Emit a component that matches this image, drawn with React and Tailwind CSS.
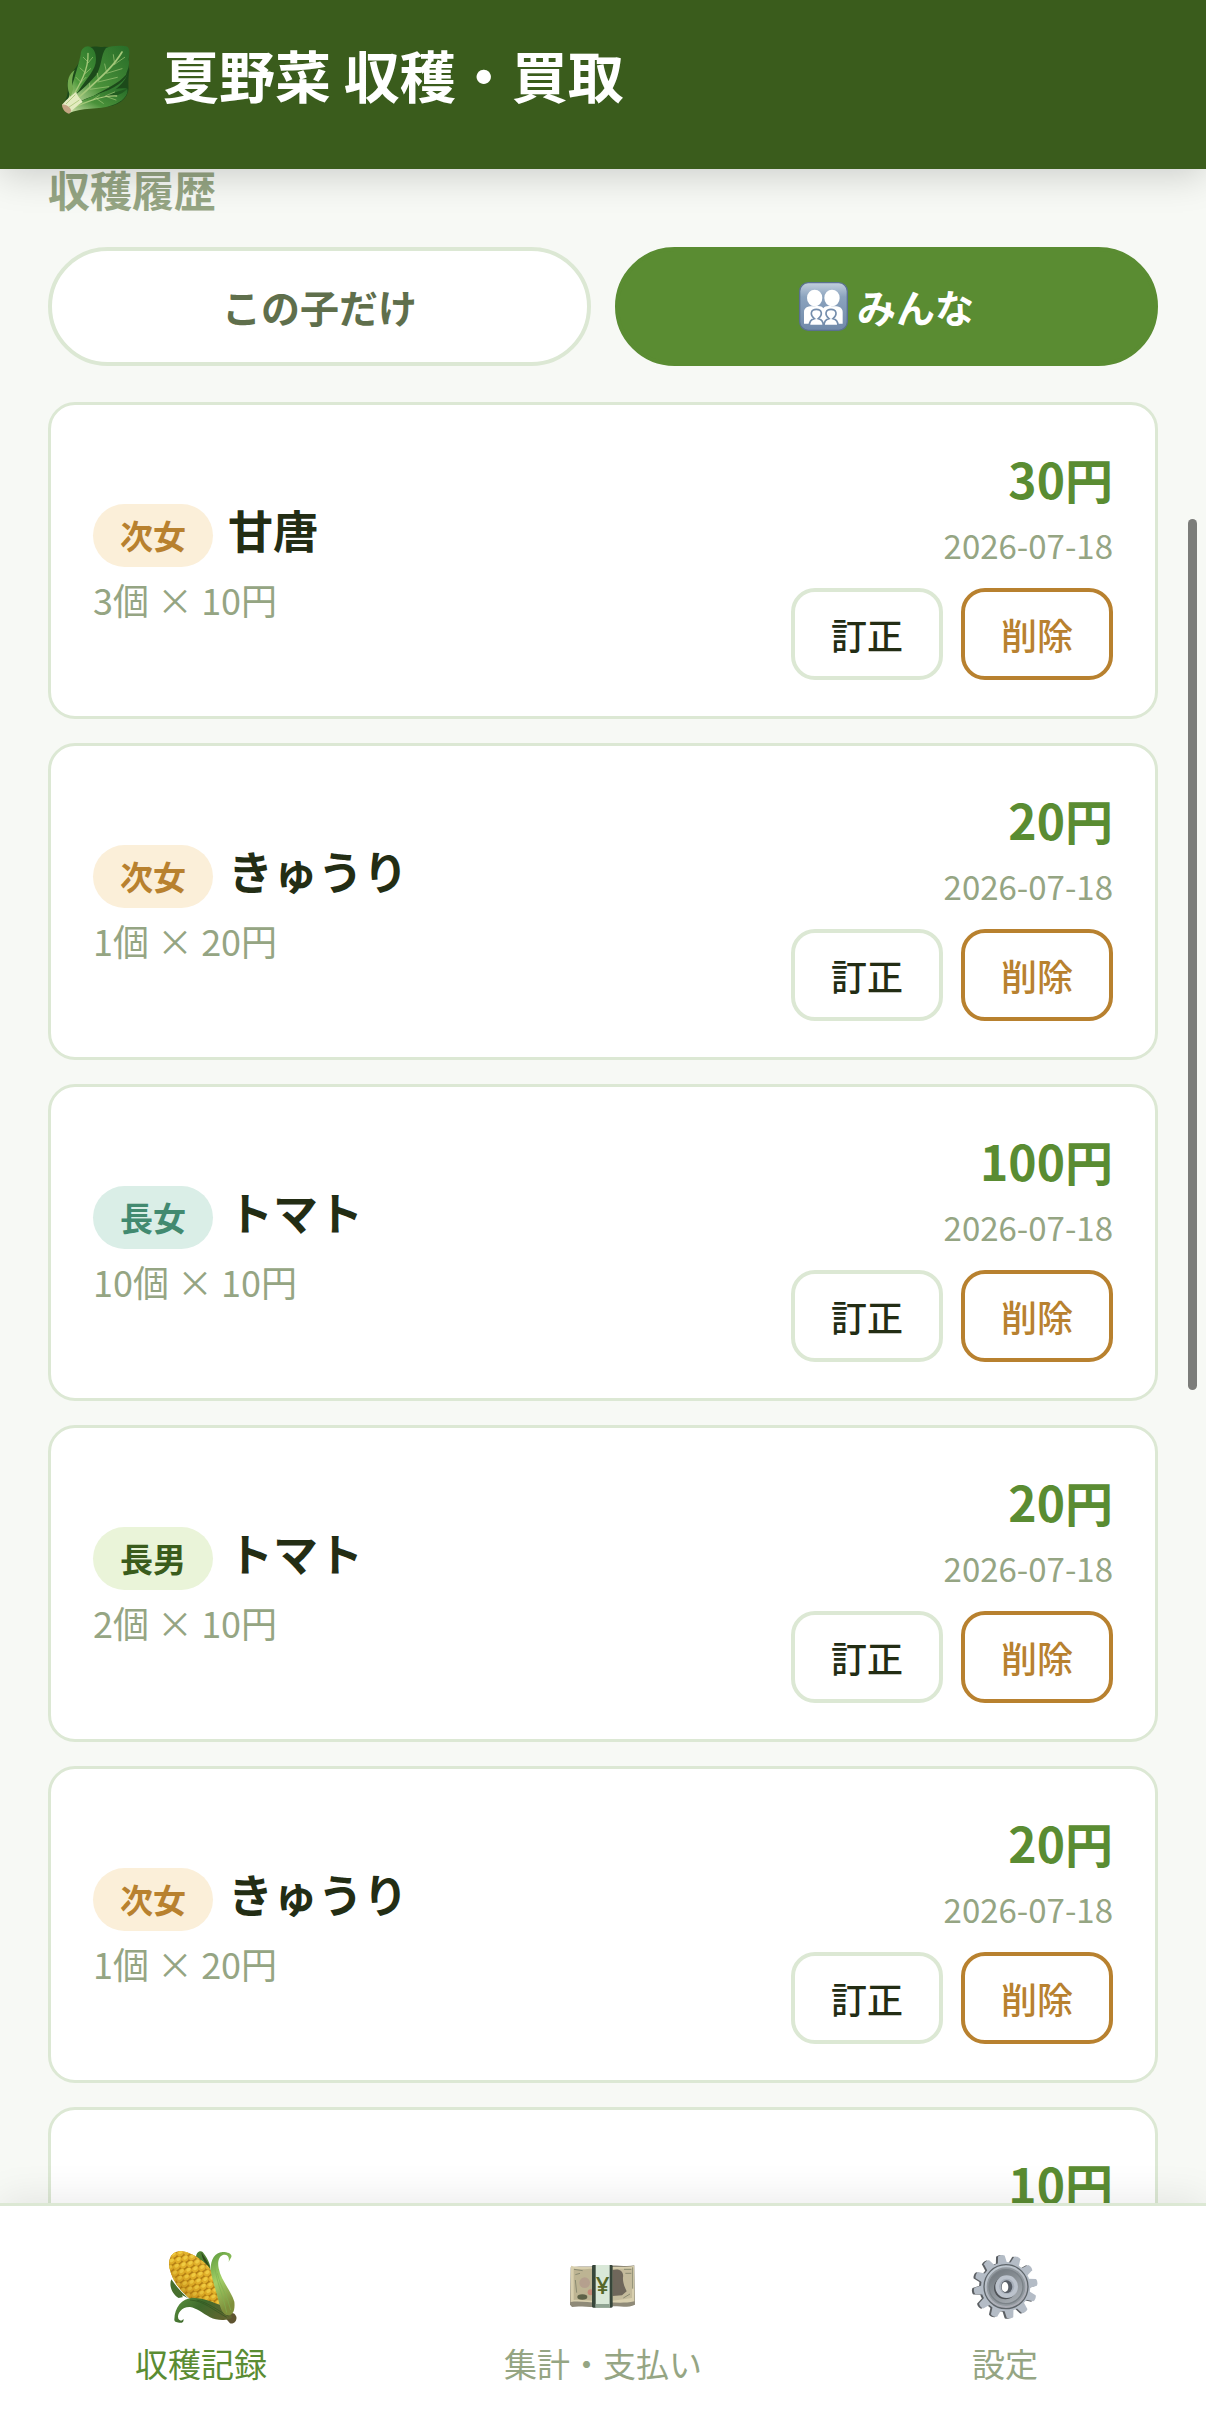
import { useState } from "react";

const RECORDS = [
  { id: 1, child: "次女", crop: "甘唐", count: 3, price: 10, date: "2026-07-18" },
  { id: 2, child: "次女", crop: "きゅうり", count: 1, price: 20, date: "2026-07-18" },
  { id: 3, child: "長女", crop: "トマト", count: 10, price: 10, date: "2026-07-18" },
  { id: 4, child: "長男", crop: "トマト", count: 2, price: 10, date: "2026-07-18" },
  { id: 5, child: "次女", crop: "きゅうり", count: 1, price: 20, date: "2026-07-18" },
  { id: 6, child: "長男", crop: "トマト", count: 1, price: 10, date: "2026-07-18" },
];

const BADGE = {
  次女: "bg-[#fbefd9] text-[#b8812f]",
  長女: "bg-[#daeee7] text-[#428a70]",
  長男: "bg-[#eaf4d9] text-[#3a5c1c]",
};

const TABS = [
  { id: "record", label: "収穫記録", Icon: CornIcon },
  { id: "summary", label: "集計・支払い", Icon: YenIcon },
  { id: "settings", label: "設定", Icon: GearIcon },
];

export default function App() {
  const [scope, setScope] = useState("all");
  const [tab, setTab] = useState("record");

  return (
    <div className="flex h-screen flex-col overflow-hidden bg-[#f7f9f5] font-['Noto_Sans_CJK_JP','Noto_Sans',sans-serif] text-[#232d14]">
      {/* Header */}
      <header className="z-10 flex shrink-0 items-center gap-[31px] bg-[#3a5c1c] px-[60px] pt-[38px] pb-[59px] text-white shadow-[0_6px_36px_rgba(0,0,0,0.18)]">
        <LeafIcon />
        <h1 className="text-[56px] leading-[72px] font-bold">夏野菜 収穫・買取</h1>
      </header>

      {/* History */}
      <main className="min-h-0 flex-1 overflow-hidden px-12">
        <h2 className="text-[42px] leading-[39px] font-bold text-[#95a583]">収穫履歴</h2>

        <div className="mt-[39px] grid grid-cols-2 gap-6">
          <ScopeButton active={scope === "mine"} onClick={() => setScope("mine")}>
            この子だけ
          </ScopeButton>
          <ScopeButton active={scope === "all"} onClick={() => setScope("all")}>
            <FamilyIcon />
            みんな
          </ScopeButton>
        </div>

        <ul className="mt-9 flex flex-col gap-6">
          {RECORDS.map((r) => (
            <RecordCard key={r.id} record={r} />
          ))}
        </ul>
      </main>

      {/* Bottom tabs */}
      <nav className="z-10 grid shrink-0 grid-cols-3 border-t-3 border-[#dce8d4] bg-white shadow-[0_-6px_36px_rgba(0,0,0,0.08)]">
        {TABS.map(({ id, label, Icon }) => (
          <button
            key={id}
            type="button"
            onClick={() => setTab(id)}
            className={[
              "flex flex-col items-center gap-4 pt-[45px] pb-[26px] text-[33px] leading-[48px]",
              tab === id ? "text-[#5a8c32]" : "text-[#95a583]",
            ].join(" ")}
          >
            <Icon />
            {label}
          </button>
        ))}
      </nav>

      {/* Scroll thumb */}
      <div className="fixed top-[519px] right-[9px] h-[871px] w-[9px] rounded-full bg-[#7c7d7a]" />
    </div>
  );
}

function ScopeButton({ active, onClick, children }) {
  return (
    <button
      type="button"
      aria-pressed={active}
      onClick={onClick}
      className={[
        "flex items-center justify-center gap-[9px] rounded-full border-4 py-[26px] text-[39px] leading-[59px] font-bold",
        active
          ? "border-[#5a8c32] bg-[#5a8c32] text-white"
          : "border-[#dce8d4] bg-white text-[#5f6f4c]",
      ].join(" ")}
    >
      {children}
    </button>
  );
}

function RecordCard({ record }) {
  const { child, crop, count, price, date } = record;
  return (
    <li className="flex shrink-0 items-center justify-between rounded-[27px] border-3 border-[#dce8d4] bg-white px-[42px] py-9">
      <div>
        <div className="flex items-baseline gap-[15px]">
          <span className={`rounded-full px-[27px] py-[6px] text-[33px] leading-[51px] font-bold ${BADGE[child]}`}>
            {child}
          </span>
          <span className="text-[45px] leading-[68px] font-bold">{crop}</span>
        </div>
        <p className="mt-[6px] text-[36px] leading-[52px] text-[#95a583]">
          {count}個 × {price}円
        </p>
      </div>

      <div className="text-right">
        <p className="text-[48px] leading-[74px] font-bold text-[#5a8c32]">{count * price}円</p>
        <p className="text-[33px] leading-[60px] text-[#95a583]">{date}</p>
        <div className="mt-[13px] flex justify-end gap-[18px]">
          <button type="button" className="rounded-[24px] border-4 border-[#dce8d4] px-9 py-[15px] text-[36px] leading-[54px] font-medium">
            訂正
          </button>
          <button type="button" className="rounded-[24px] border-4 border-[#b8812f] px-9 py-[15px] text-[36px] leading-[54px] font-medium text-[#b8812f]">
            削除
          </button>
        </div>
      </div>
    </li>
  );
}

function LeafIcon() {
  return (
    <svg className="size-[72px] shrink-0" viewBox="60 54 216 216" overflow="visible" aria-hidden="true">
      <defs>
        <linearGradient id="leafA" x1="0.8" y1="0" x2="0.1" y2="1">
          <stop offset="0" stopColor="#2f7a2c" />
          <stop offset="0.6" stopColor="#4f9a3c" />
          <stop offset="1" stopColor="#cfe0a0" />
        </linearGradient>
        <linearGradient id="leafB" x1="1" y1="0.1" x2="0" y2="1">
          <stop offset="0" stopColor="#2a6f29" />
          <stop offset="0.55" stopColor="#4a923a" />
          <stop offset="1" stopColor="#dbe8b4" />
        </linearGradient>
      </defs>
      <path d="M150 82C165 76 185 84 192 80L262 84C272 95 264 125 268 150C262 190 268 205 264 215C255 250 215 264 160 262C125 262 100 270 88 281L66 256C90 225 82 205 82 185C95 150 118 140 124 105Z" fill="#1c4a1a" />
      <path d="M122 104C122 88 134 79 144 79C160 82 168 96 168 118C168 150 140 175 116 212L78 258L92 214C100 180 112 150 122 104Z" fill="url(#leafA)" />
      <path d="M104 150C88 160 80 182 84 206C86 220 92 226 90 238L100 206C94 190 96 170 104 150Z" fill="#72a94e" />
      <path d="M198 84C215 76 250 76 262 80C271 88 268 104 266 118C270 140 262 150 258 164C236 190 200 205 160 228C125 240 100 254 84 262L76 250C105 225 140 200 168 166C186 140 182 104 198 84Z" fill="url(#leafB)" />
      <path d="M266 152C260 184 222 204 176 222L90 262C130 250 160 240 190 226C225 214 256 190 266 152Z" fill="#327a30" />
      <path d="M262 206C230 200 180 218 118 246L86 280C120 262 180 270 216 256C246 246 266 226 262 206Z" fill="url(#leafB)" />
      <path d="M262 206C240 212 205 222 180 234C210 232 246 226 262 206Z" fill="#215a20" />
      <g fill="none" stroke="#a5c87a" strokeLinecap="round">
        <path d="M144 100C146 150 122 190 86 250" strokeWidth="4" />
        <path d="M246 96C215 150 160 190 84 262" strokeWidth="5" />
        <path d="M230 228C190 226 140 244 92 268" strokeWidth="4" />
        <path d="M144 126L130 112M143 130L158 112M136 158L120 144M134 162L152 146M122 186L108 172M120 190L138 172M224 132L220 104M222 134L254 112M200 158L194 132M200 160L246 146M176 182L172 160M174 186L232 172M150 204L148 190M150 208L206 200M200 230L228 240M170 236L190 250M196 228L224 216M160 238L178 226" strokeWidth="2" />
      </g>
      <path d="M66 254C82 236 96 226 108 216C112 228 122 238 128 246C112 256 100 268 88 280Z" fill="#e3ebc0" />
      <path d="M78 252L106 224M86 262L118 240" stroke="#b4cc84" strokeWidth="3" fill="none" />
      <path d="M66 254C76 250 92 262 94 272L88 281C78 280 66 268 66 254Z" fill="#c3a583" />
    </svg>
  );
}

function FamilyIcon() {
  return (
    <svg className="size-[49px] shrink-0" viewBox="57 45 147 147" aria-hidden="true">
      <defs>
        <linearGradient id="familyBg" x1="0" y1="0" x2="0" y2="1">
          <stop offset="0" stopColor="#c3d0de" />
          <stop offset="0.3" stopColor="#8ba3be" />
          <stop offset="1" stopColor="#7089a9" />
        </linearGradient>
      </defs>
      <rect x="59" y="47" width="143" height="143" rx="26" fill="url(#familyBg)" stroke="#5b7191" strokeWidth="4" />
      <g fill="#fff">
        <ellipse cx="104" cy="93" rx="23" ry="25" />
        <ellipse cx="156" cy="93" rx="23" ry="25" />
        <path d="M72 170V135C72 120 86 116 104 118C118 116 126 118 130 124C134 118 142 116 156 118C174 116 188 120 188 135V170Z" />
      </g>
      <g fill="#fff" stroke="#748dac" strokeWidth="5">
        <path d="M88 176C88 164 95 157 103 155C88 142 93 127 109 127C125 127 130 142 115 155C123 157 130 162 130 176Z" />
        <path d="M132 176C132 164 139 157 147 155C132 142 137 127 153 127C169 127 174 142 159 155C167 157 174 162 174 176Z" />
      </g>
    </svg>
  );
}

// kernels sit on a grid tilted along the cob
const KERNELS = [];
for (let row = -5; row <= 5; row++) {
  for (let col = -6; col <= 6; col++) {
    const u = col * 22 + (row % 2 ? 11 : 0);
    const v = row * 18;
    KERNELS.push([580 + u * 0.68 - v * 0.73, 588 + u * 0.73 + v * 0.68]);
  }
}

function CornIcon() {
  return (
    <svg className="size-[72px]" viewBox="495 513 216 216" overflow="visible" aria-hidden="true">
      <defs>
        <clipPath id="cob">
          <path d="M508 560C504 530 520 512 545 514C572 517 594 532 615 550C634 567 640 585 645 610L662 674C630 672 600 660 570 656C545 636 515 602 508 560Z" />
        </clipPath>
        <linearGradient id="cobShade" x1="0.8" y1="0.1" x2="0.2" y2="0.8">
          <stop offset="0" stopColor="#fff2a0" stopOpacity="0.3" />
          <stop offset="0.5" stopColor="#d9a018" stopOpacity="0" />
          <stop offset="1" stopColor="#8a5a08" stopOpacity="0.5" />
        </linearGradient>
        <linearGradient id="huskRight" x1="0" y1="0" x2="0.3" y2="1">
          <stop offset="0" stopColor="#5c9a3c" />
          <stop offset="0.5" stopColor="#a3d068" />
          <stop offset="1" stopColor="#7f8f3c" />
        </linearGradient>
        <linearGradient id="huskLow" x1="0" y1="0" x2="1" y2="0.4">
          <stop offset="0" stopColor="#5c9440" />
          <stop offset="0.5" stopColor="#3f6a2c" />
          <stop offset="1" stopColor="#5f6430" />
        </linearGradient>
      </defs>
      <path d="M588 530C590 514 602 511 608 516C618 530 634 550 631 574C622 556 600 545 588 530Z" fill="#4f8234" />
      <path d="M604 516C612 532 626 546 629 564C618 552 606 540 604 516Z" fill="#2f4a1c" />
      <path d="M514 598C506 616 516 642 536 654L550 651C544 648 542 640 566 656C548 640 530 622 514 598Z" fill="#476f2e" />
      <g clipPath="url(#cob)">
        <rect x="500" y="505" width="170" height="175" fill="#b07c14" />
        {KERNELS.map(([x, y], i) => (
          <g key={i} transform={`rotate(-35 ${x} ${y})`}>
            <ellipse cx={x} cy={y} rx="11" ry="9" fill="#e0ae28" />
            <ellipse cx={x + 2} cy={y - 2} rx="7" ry="5" fill="#f0cc42" />
          </g>
        ))}
        <rect x="500" y="505" width="170" height="175" fill="url(#cobShade)" />
      </g>
      <path d="M676 714C684 698 702 692 709 710C712 722 700 734 690 730Z" fill="#5e5430" />
      <path d="M523 718C524 682 545 655 578 653C618 655 640 668 660 674C676 690 694 700 696 712C688 722 652 724 630 712C606 698 590 684 570 681C546 680 530 700 535 716C540 724 548 722 550 716C553 726 545 730 538 728C528 728 522 724 523 718Z" fill="url(#huskLow)" />
      <path d="M570 660C610 662 640 690 680 712M590 660C625 668 650 690 686 708" fill="none" stroke="#2f5420" strokeWidth="2" />
      <path d="M632 568C632 538 645 517 668 516C685 516 697 522 694 531L686 546C689 530 683 523 671 524C656 528 652 545 656 565C662 600 692 630 703 665C706 692 698 706 684 706C668 704 663 690 655 660C645 620 636 600 632 568Z" fill="url(#huskRight)" />
      <path d="M644 550C646 600 668 640 680 698M652 580C660 620 684 650 692 690" fill="none" stroke="#7fb050" strokeWidth="2" />
    </svg>
  );
}

function YenIcon() {
  return (
    <svg className="size-[72px]" viewBox="381 213 216 216" aria-hidden="true">
      <path d="M392 262C420 256 450 262 488 258C530 254 560 262 583 256L585 374C560 386 530 376 488 380C450 384 420 376 396 381L390 374Z" fill="#8f8a78" />
      <path d="M393 257C420 264 450 260 488 260C530 260 556 264 582 257L583 364C550 372 520 366 488 368C450 370 425 362 392 366Z" fill="#d8cfae" />
      <path d="M401 266C425 270 445 266 458 266V362C440 362 420 358 401 360Z" fill="#bdb493" />
      <path d="M518 266H576V354L518 362Z" fill="#c4bb9c" />
      <circle cx="434" cy="308" r="16" fill="#b5a08e" />
      <circle cx="452" cy="337" r="9" fill="#c58a78" />
      <ellipse cx="427" cy="351" rx="15" ry="8" fill="#5d6248" />
      <path d="M518 270C540 264 552 276 549 292C548 304 552 318 560 334L546 346L518 348Z" fill="#6f675b" />
      <path d="M402 268L428 272M406 284L420 280M406 300L410 338M552 268H574M556 280H574M578 262V326M550 354L570 342" stroke="#8b8b72" strokeWidth="3" fill="none" />
      <rect x="456" y="255" width="62" height="128" rx="4" fill="#37463a" />
      <rect x="467" y="255" width="42" height="128" fill="#d9e8d8" />
      <rect x="467" y="372" width="42" height="11" fill="#8fa392" />
      <text x="488" y="343" textAnchor="middle" fontSize="72" fontWeight="600" fill="#566829" className="font-['Open_Sans',sans-serif]">
        ¥
      </text>
    </svg>
  );
}

const TEETH = Array.from({ length: 12 }, (_, i) => -8 + i * 30);

function GearBody({ fill }) {
  return (
    <g fill={fill}>
      <circle cx="437" cy="620" r="74" />
      {TEETH.map((a) => (
        <path key={a} d="M506 606L530 610C534 614 534 626 530 630L506 634Z" transform={`rotate(${a} 437 620)`} />
      ))}
    </g>
  );
}

function GearIcon() {
  return (
    <svg className="size-[72px]" viewBox="327 513 216 216" overflow="visible" aria-hidden="true">
      <defs>
        <linearGradient id="gearFace" x1="0" y1="0" x2="0.4" y2="1">
          <stop offset="0" stopColor="#c3cdd6" />
          <stop offset="1" stopColor="#a9abb3" />
        </linearGradient>
        <linearGradient id="gearDish" x1="0" y1="0" x2="0.6" y2="1">
          <stop offset="0" stopColor="#6d747a" />
          <stop offset="1" stopColor="#a3a9af" />
        </linearGradient>
      </defs>
      <g transform="translate(-6 1)">
        <GearBody fill="#5b5f63" />
      </g>
      <GearBody fill="#b4bcc6" />
      <circle cx="438" cy="620" r="66" fill="url(#gearFace)" stroke="#5e656a" strokeWidth="4" />
      <circle cx="438" cy="620" r="58" fill="#92999f" />
      <circle cx="438" cy="620" r="51" fill="url(#gearDish)" stroke="#7b8288" strokeWidth="4" />
      <circle cx="436" cy="624" r="34" fill="#4f5358" />
      <circle cx="440" cy="620" r="34" fill="#bcc3cd" />
      <circle cx="440" cy="619" r="23" fill="#a7afba" />
      <ellipse cx="440" cy="620" rx="17" ry="19" fill="#575d66" />
      <ellipse cx="435" cy="621" rx="10" ry="15" fill="#fff" />
    </svg>
  );
}
